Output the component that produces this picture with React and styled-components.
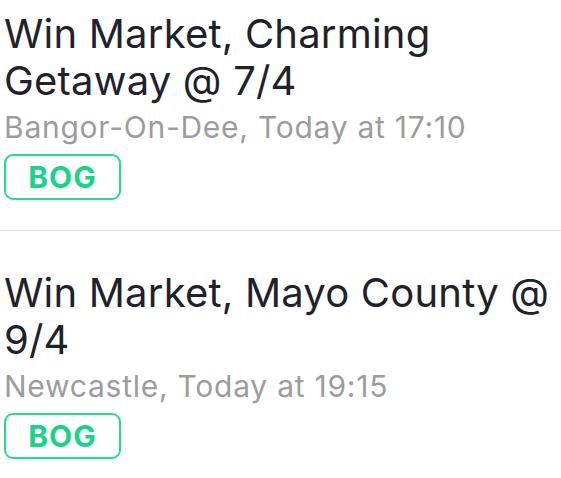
import React from "react";
import styled, { createGlobalStyle } from "styled-components";

const Global = createGlobalStyle`
  html, body { margin: 0; padding: 0; background: #ffffff; }
  body { font-family: Inter, "Noto Sans", sans-serif; -webkit-font-smoothing: antialiased; }
`;

const List = styled.div`
  display: flex;
  flex-direction: column;
  width: 561px;
`;

const Item = styled.div`
  display: flex;
  flex-direction: column;
  align-items: flex-start;
  padding: 38px 4px 30px 4px;
  border-bottom: 1px solid #e4e4e6;
  &:first-child { padding-top: 10px; }
  &:last-child { border-bottom: none; }
`;

const Title = styled.div`
  font-size: 40px;
  line-height: 47px;
  font-weight: 400;
  color: #1d222c;
  letter-spacing: 0.2px;
`;

const Meta = styled.div`
  margin-top: 5px;
  font-size: 30px;
  line-height: 36px;
  color: #9c9ca0;
  letter-spacing: 0.75px;
`;

const Badge = styled.span`
  margin-top: 9px;
  box-sizing: border-box;
  display: inline-flex;
  align-items: center;
  justify-content: center;
  width: 117px;
  height: 46px;
  border: 2.5px solid #22dc8e;
  border-radius: 9px;
  color: #1bd387;
  font-size: 30px;
  font-weight: 700;
  letter-spacing: 1px;
`;

const items = [
  { title: "Win Market, Charming Getaway @ 7/4", meta: "Bangor-On-Dee, Today at 17:10" },
  { title: "Win Market, Mayo County @ 9/4", meta: "Newcastle, Today at 19:15" },
];

export default function App() {
  return (
    <>
      <Global />
      <List>
        {items.map((it) => (
          <Item key={it.title}>
            <Title>{it.title}</Title>
            <Meta>{it.meta}</Meta>
            <Badge>BOG</Badge>
          </Item>
        ))}
      </List>
    </>
  );
}
